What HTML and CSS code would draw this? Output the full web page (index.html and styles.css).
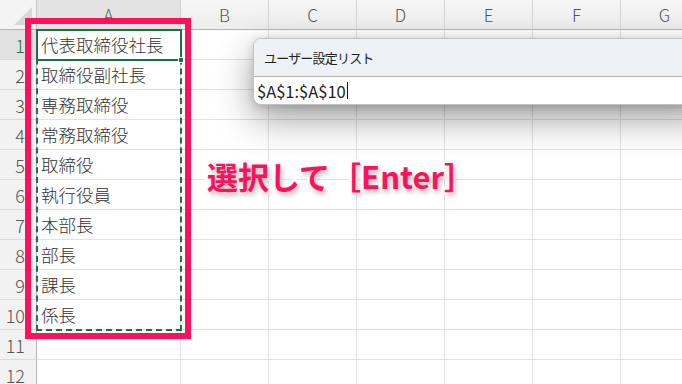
FILE: index.html
```html
<!DOCTYPE html>
<html lang="ja">
<head>
    <meta charset="UTF-8">
    <title>ユーザー設定リスト</title>
    <link rel="stylesheet" href="styles.css">
</head>
<body>
    <div class="screen">
        <div class="sheet">
            <div class="corner"><span class="corner-tri"></span></div>
            <div class="col-head active">A</div>
            <div class="col-head">B</div>
            <div class="col-head">C</div>
            <div class="col-head">D</div>
            <div class="col-head">E</div>
            <div class="col-head">F</div>
            <div class="col-head">G</div>

            <div class="row-head active">1</div><div class="cell">代表取締役社長</div><div class="cell"></div><div class="cell"></div><div class="cell"></div><div class="cell"></div><div class="cell"></div><div class="cell"></div>
            <div class="row-head">2</div><div class="cell">取締役副社長</div><div class="cell"></div><div class="cell"></div><div class="cell"></div><div class="cell"></div><div class="cell"></div><div class="cell"></div>
            <div class="row-head">3</div><div class="cell">専務取締役</div><div class="cell"></div><div class="cell"></div><div class="cell"></div><div class="cell"></div><div class="cell"></div><div class="cell"></div>
            <div class="row-head">4</div><div class="cell">常務取締役</div><div class="cell"></div><div class="cell"></div><div class="cell"></div><div class="cell"></div><div class="cell"></div><div class="cell"></div>
            <div class="row-head">5</div><div class="cell">取締役</div><div class="cell"></div><div class="cell"></div><div class="cell"></div><div class="cell"></div><div class="cell"></div><div class="cell"></div>
            <div class="row-head">6</div><div class="cell">執行役員</div><div class="cell"></div><div class="cell"></div><div class="cell"></div><div class="cell"></div><div class="cell"></div><div class="cell"></div>
            <div class="row-head">7</div><div class="cell">本部長</div><div class="cell"></div><div class="cell"></div><div class="cell"></div><div class="cell"></div><div class="cell"></div><div class="cell"></div>
            <div class="row-head">8</div><div class="cell">部長</div><div class="cell"></div><div class="cell"></div><div class="cell"></div><div class="cell"></div><div class="cell"></div><div class="cell"></div>
            <div class="row-head">9</div><div class="cell">課長</div><div class="cell"></div><div class="cell"></div><div class="cell"></div><div class="cell"></div><div class="cell"></div><div class="cell"></div>
            <div class="row-head">10</div><div class="cell">係長</div><div class="cell"></div><div class="cell"></div><div class="cell"></div><div class="cell"></div><div class="cell"></div><div class="cell"></div>
            <div class="row-head">11</div><div class="cell"></div><div class="cell"></div><div class="cell"></div><div class="cell"></div><div class="cell"></div><div class="cell"></div><div class="cell"></div>
            <div class="row-head">12</div><div class="cell"></div><div class="cell"></div><div class="cell"></div><div class="cell"></div><div class="cell"></div><div class="cell"></div><div class="cell"></div>
        </div>

        <!-- selection overlays -->
        <div class="copy-range"></div>
        <div class="active-cell"><span class="fill-handle"></span></div>
        <div class="highlight-box"></div>

        <div class="dialog">
            <div class="dialog-title">ユーザー設定リスト</div>
            <div class="dialog-input">$A$1:$A$10<span class="caret"></span></div>
        </div>

        <div class="callout">選択して［Enter］</div>
    </div>
</body>
</html>
```

FILE: styles.css
```css
* {
    margin: 0;
    padding: 0;
    box-sizing: border-box;
}

body {
    width: 682px;
    height: 384px;
    overflow: hidden;
    background: #ffffff;
    font-family: "Noto Sans CJK JP", "Noto Sans", sans-serif;
}

.screen {
    position: relative;
    width: 682px;
    height: 384px;
    overflow: hidden;
}

.sheet {
    display: grid;
    grid-template-columns: 37px 144px repeat(6, 88px);
    grid-template-rows: repeat(13, 30px);
    width: 709px;
}

.corner {
    position: relative;
    background: #f3f3f3;
    border-right: 1px solid #c6c6c6;
    border-bottom: 1px solid #b5b5b5;
}

.corner-tri {
    position: absolute;
    right: 4px;
    bottom: 4px;
    width: 0;
    height: 0;
    border-left: 18px solid transparent;
    border-bottom: 18px solid #d9d9d9;
}

.col-head {
    display: flex;
    align-items: center;
    justify-content: center;
    background: linear-gradient(#f6f6f6, #ededed);
    border-right: 1px solid #d4d4d4;
    border-bottom: 1px solid #b5b5b5;
    color: #555;
    font-size: 17px;
    font-weight: 300;
}

.col-head.active {
    background: #e3e3e3;
    color: #2b7a50;
}

.row-head {
    display: flex;
    align-items: center;
    justify-content: flex-end;
    padding-right: 11px;
    background: #f2f2f2;
    border-right: 1px solid #b5b5b5;
    border-bottom: 1px solid #dadada;
    color: #555;
    font-size: 18px;
    font-weight: 300;
}

.row-head.active {
    background: #e1e1e1;
    color: #1e7145;
}

.cell {
    display: flex;
    align-items: center;
    padding-left: 4px;
    border-right: 1px solid #e1e1e1;
    border-bottom: 1px solid #e1e1e1;
    color: #333;
    font-size: 17.5px;
    font-weight: 300;
    white-space: nowrap;
}

.copy-range {
    position: absolute;
    left: 36px;
    top: 29px;
    width: 146px;
    height: 302px;
    border: 2px dashed #1f6e43;
}

.active-cell {
    position: absolute;
    left: 36px;
    top: 29px;
    width: 146px;
    height: 32px;
    border: 2px solid #1f6e43;
}

.fill-handle {
    position: absolute;
    right: -4px;
    bottom: -4px;
    width: 6px;
    height: 6px;
    background: #1f6e43;
    border: 1px solid #fff;
}

.highlight-box {
    position: absolute;
    left: 25px;
    top: 18px;
    width: 166px;
    height: 321px;
    border: 6px solid #fb115c;
}

.dialog {
    position: absolute;
    left: 253px;
    top: 38px;
    width: 460px;
    border: 1px solid #c2c2c2;
    border-radius: 8px;
    background: #ffffff;
    overflow: hidden;
    box-shadow: 0 14px 36px rgba(0, 0, 0, 0.38), 0 2px 8px rgba(0, 0, 0, 0.15);
}

.dialog-title {
    height: 38px;
    padding-left: 10px;
    display: flex;
    align-items: center;
    background: #eef2f7;
    border-bottom: 1px solid #b3b3b3;
    color: #222;
    font-size: 13px;
    letter-spacing: -0.8px;
}

.dialog-input {
    height: 27px;
    padding-left: 3px;
    display: flex;
    align-items: center;
    color: #222;
    font-size: 16.5px;
}

.caret {
    display: inline-block;
    width: 1px;
    height: 17px;
    margin-left: 1px;
    background: #111;
}

.callout {
    position: absolute;
    left: 207px;
    top: 153px;
    color: #fb115c;
    font-size: 31px;
    font-weight: 700;
    white-space: nowrap;
    -webkit-text-stroke: 6px #ffffff;
    paint-order: stroke fill;
    text-shadow: 2px 3px 5px rgba(0, 0, 0, 0.3);
}
```
